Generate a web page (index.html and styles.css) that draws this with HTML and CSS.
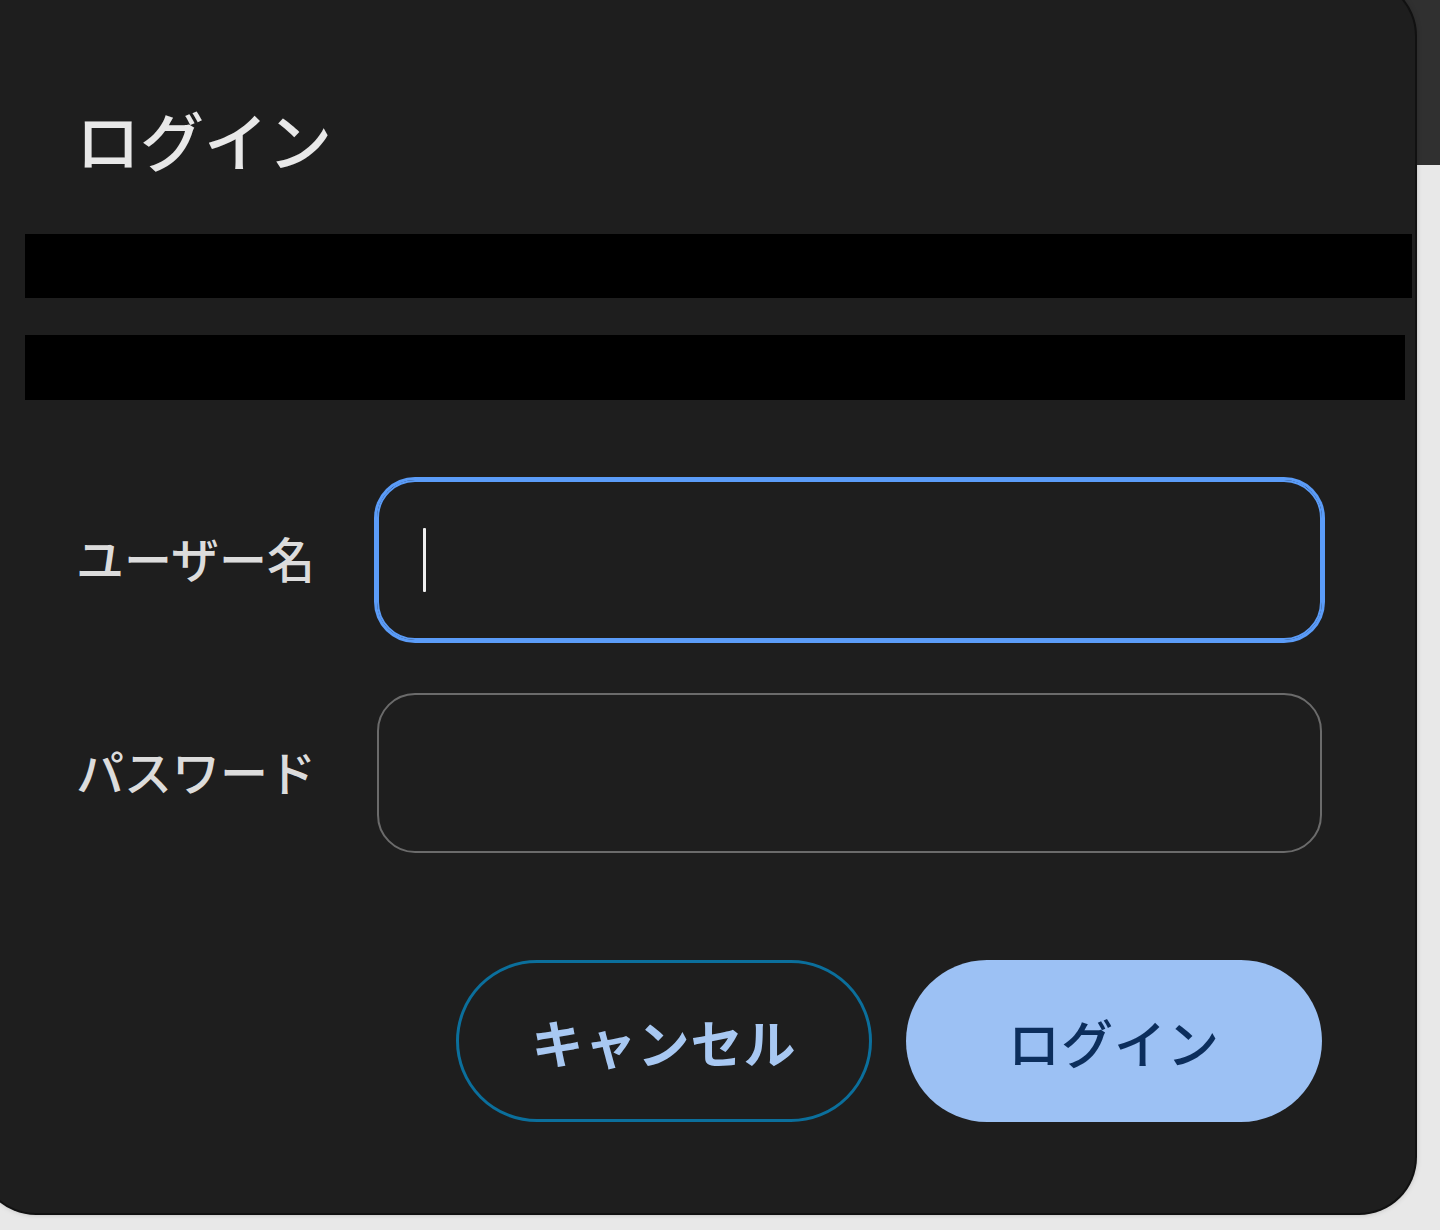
FILE: index.html
```html
<!DOCTYPE html>
<html lang="ja">
<head>
<meta charset="utf-8">
<title>ログイン</title>
<link rel="stylesheet" href="styles.css">
</head>
<body>
<div class="dialog">
 <h1 class="title">ログイン</h1>

 <div class="redact r1"></div>
 <div class="redact r2"></div>

 <form class="login">
  <label class="row">
   <span class="label">ユーザー名</span>
   <span class="field focus"><span class="caret"></span></span>
  </label>
  <label class="row">
   <span class="label">パスワード</span>
   <span class="field"></span>
  </label>

  <div class="buttons">
   <button type="button" class="btn cancel">キャンセル</button>
   <button type="button" class="btn ok">ログイン</button>
  </div>
 </form>
</div>
</body>
</html>
```

FILE: styles.css
```css
html, body{
	margin: 0;
	height: 100%;
	overflow: hidden;
}

body{
	background: linear-gradient(#303030 0, #303030 165px, #e8e8e8 165px);
	font-family: "Noto Sans CJK JP", "Noto Sans", sans-serif;
}

/* dialog */
.dialog{
	width: 1435px;
	height: 1233px;
	margin: -20px 0 0 -20px;
	background: #1e1e1e;
	border-radius: 56px;
	box-shadow: 0 0 0 2px #111, 0 0 6px rgba(0,0,0,.35);
	display: flex;
	flex-direction: column;
}

.title{
	margin: 126px 0 4px 96px;
	font-size: 64px;
	line-height: 64px;
	font-weight: 500;
	color: #e8e8e8;
}

.redact{
	background: #000;
	margin-left: 45px;
}
.r1{
	margin-top: 60px;
	height: 64px;
	margin-right: 3px;
}
.r2{
	margin-top: 37px;
	height: 65px;
	margin-right: 10px;
}

/* form */
.login{
	margin: 80px 93px 0 96px;
	display: flex;
	flex-direction: column;
}

.row{
	display: grid;
	grid-template-columns: 301px 1fr;
	align-items: center;
}
.row + .row{
	margin-top: 53px;
}

.label{
	font-size: 48px;
	font-weight: 500;
	color: #dcdcdc;
	margin-top: -6px;
}

.field{
	height: 156px;
	border: 2px solid #6b6b6b;
	border-radius: 38px;
	display: flex;
	align-items: center;
	padding-left: 44px;
}
.field.focus{
	border-color: #5b9cf8;
	box-shadow: 0 0 0 3px #5b9cf8;
}
.caret{
	width: 3px;
	height: 64px;
	background: #f0f0f0;
	border-radius: 1px;
}

.buttons{
	margin-top: 107px;
	display: flex;
	justify-content: flex-end;
	gap: 34px;
}

.btn{
	width: 416px;
	height: 162px;
	border-radius: 81px;
	font-family: inherit;
	font-size: 52px;
	font-weight: 700;
	letter-spacing: 1px;
	cursor: pointer;
}
.cancel{
	background: transparent;
	border: 3px solid #0b6f9c;
	color: #a8c8f2;
}
.ok{
	background: #9cc1f4;
	border: 0;
	color: #0c2e5c;
	font-weight: 500;
}
```
